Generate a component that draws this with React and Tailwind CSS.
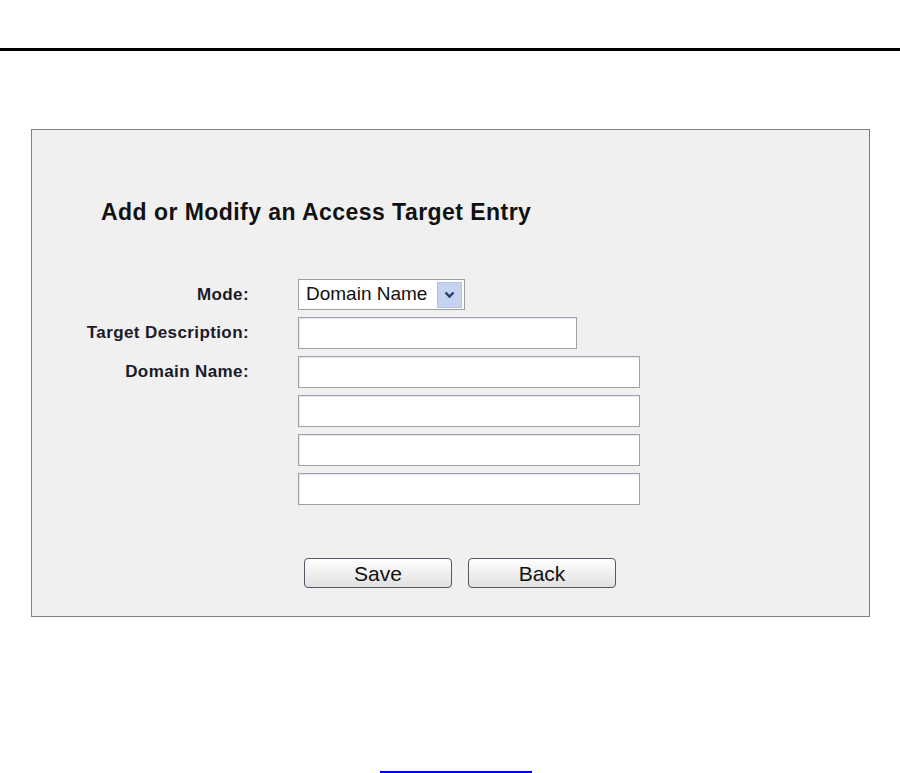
import React from 'react'

const FONT = { fontFamily: '"Liberation Sans", Arial, sans-serif' }

const Field = ({ w }) => (
  <div className={`h-[32px] ${w} border border-[#9ca2a8] bg-white shadow-[inset_1px_1px_0_#e4eaf4]`} />
)

export default function App() {
  return (
    <div className="w-[900px] h-[773px] bg-white overflow-hidden flex flex-col" style={FONT}>
      {/* top rule */}
      <div className="mt-[48px] h-[3px] bg-black" />

      {/* panel */}
      <div className="mt-[78px] ml-[31px] mr-[30px] h-[488px] border border-[#7f7f7f] bg-[#f0f0f0] flex flex-col">
        <h2 className="mt-[69px] ml-[69px] text-[23px] leading-[26px] tracking-[0.45px] font-bold text-[#111]">
          Add or Modify an Access Target Entry
        </h2>

        <div className="mt-[54px] grid grid-cols-[217px_1fr] gap-x-[49px] gap-y-[7px] text-[17px] tracking-[0.4px] font-bold text-[#1a1a2a]">
          <div className="h-[31px] flex items-center justify-end">Mode:</div>
          <div className="h-[31px] w-[167px] border border-[#9aa0a8] bg-white flex items-center justify-between pl-[7px] pr-[2px]">
            <span className="text-[19px] tracking-normal font-normal text-[#111]">Domain Name</span>
            <span className="w-[25px] h-[26px] bg-[#c5d2f0] border border-[#b4c2e6] flex items-center justify-center">
              <svg width="11" height="8" viewBox="0 0 11 8">
                <path d="M1.5 1.5 L5.5 5.5 L9.5 1.5" fill="none" stroke="#2c3a6a" strokeWidth="2.4" />
              </svg>
            </span>
          </div>

          <div className="h-[32px] flex items-center justify-end">Target Description:</div>
          <Field w="w-[279px]" />

          <div className="h-[32px] flex items-center justify-end">Domain Name:</div>
          <Field w="w-[342px]" />
          <div />
          <Field w="w-[342px]" />
          <div />
          <Field w="w-[342px]" />
          <div />
          <Field w="w-[342px]" />
        </div>

        <div className="mt-[53px] ml-[272px] flex gap-[16px]">
          {['Save', 'Back'].map((t) => (
            <button
              key={t}
              className="w-[148px] h-[30px] rounded-[4px] border border-[#4f5a66] bg-gradient-to-b from-white to-[#e0e0e0] text-[21px] leading-none text-[#111] flex items-center justify-center"
            >
              {t}
            </button>
          ))}
        </div>
      </div>

      {/* bottom link underline */}
      <div className="mt-[154px] ml-[380px] w-[152px] h-[2px] bg-[#0000ff]" />
    </div>
  )
}
